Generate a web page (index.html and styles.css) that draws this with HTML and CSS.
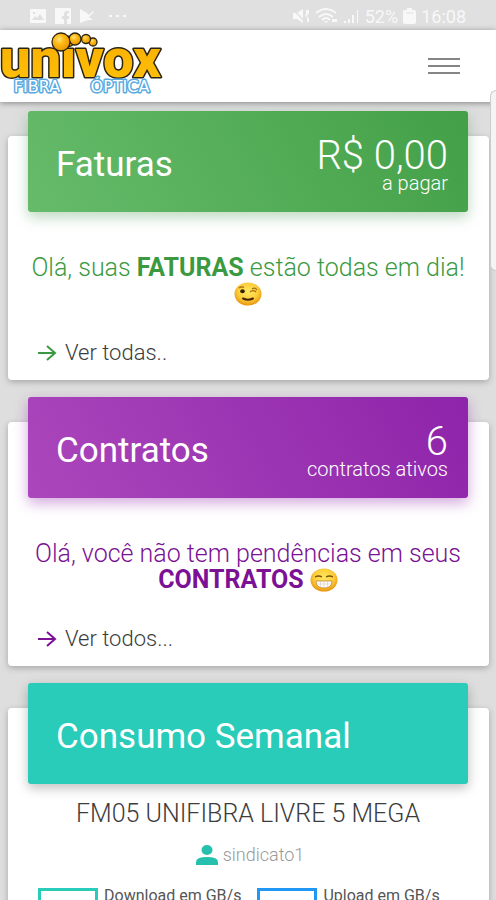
FILE: index.html
```html
<!DOCTYPE html>
<html lang="pt-BR">
<head>
<meta charset="utf-8">
<meta name="viewport" content="width=device-width, initial-scale=1">
<title>Univox Fibra Óptica</title>
<link rel="stylesheet" href="styles.css">
</head>
<body>
<div class="status">
  <div class="status-group">
    <svg width="18" height="16" viewBox="0 0 18 16"><path fill="currentColor" fill-rule="evenodd" d="M2 1h14a1 1 0 0 1 1 1v12a1 1 0 0 1-1 1H2a1 1 0 0 1-1-1V2a1 1 0 0 1 1-1zm1 11h12l-4-6-3 4-2-2zM4 4v2h2V4z"/></svg>
    <svg width="16" height="16" viewBox="0 0 16 16"><path fill="currentColor" d="M1 0h14a1 1 0 0 1 1 1v14a1 1 0 0 1-1 1h-3v-5h2V8h-2V6q0-1 2-1V3h-2q-3 0-3 3v2H7v3h2v5H1a1 1 0 0 1-1-1V1a1 1 0 0 1 1-1z"/></svg>
    <svg width="16" height="16" viewBox="0 0 16 16"><path fill="currentColor" d="M1 1l7 4 2 2 4-4 1 1-5 5 4 3H9l-8 3z"/></svg>
    <svg class="dots" width="18" height="16" viewBox="0 0 18 16"><path fill="currentColor" d="M0 7h3v2H0zM7 7h3v2H7zM14 7h3v2h-3z"/></svg>
  </div>
  <div class="status-group right">
    <svg width="18" height="16" viewBox="0 0 18 16"><path fill="currentColor" d="M1 5h4l6-4v14l-6-4H1zM14 2h3v3l-2 3 2 3v3h-2V9l-2-1 1-2z"/><path stroke="#e0e0e0" stroke-width="1.5" d="M1 1l13 14"/></svg>
    <svg width="24" height="16" viewBox="0 0 24 16"><g fill="none" stroke="currentColor" stroke-width="2"><path d="M1 5q10-8 20 0M4 9q7-6 14 0M7 12q4-4 8 0"/></g><path fill="currentColor" d="M9 13h4l-2 2zM17 11h5v3h-5z"/></svg>
    <svg width="16" height="16" viewBox="0 0 16 16"><path fill="currentColor" d="M0 13h2v2H0zM4 11h2v4H4zM8 7h2v8H8zM13 2h1v13h-1z"/></svg>
    <span>52%</span>
    <svg width="13" height="16" viewBox="0 0 13 16"><path fill="currentColor" d="M4 0h5v2h2q2 0 2 2v10q0 2-2 2H2q-2 0-2-2V4q0-2 2-2h2z"/><path stroke="#e0e0e0" d="M3 5h7"/></svg>
    <span>16:08</span>
  </div>
</div>

<header class="topbar">
  <a class="brand" href="#" aria-label="Univox Fibra Óptica">
    <svg width="166" height="64" viewBox="0 0 166 64">
      <defs>
        <linearGradient id="gold" x1="0" y1="0" x2="0" y2="1"><stop offset="0" stop-color="#f7a900"/><stop offset="1" stop-color="#ffc40a"/></linearGradient>
        <radialGradient id="ball" cx=".4" cy=".35" r=".7"><stop offset="0" stop-color="#ffe27a"/><stop offset=".4" stop-color="#fdb813"/><stop offset="1" stop-color="#e59400"/></radialGradient>
      </defs>
      <text class="logo-name" x="0" y="45" fill="url(#gold)">univox</text>
      <g fill="url(#ball)" stroke="#2b2412" stroke-width="1.3">
        <circle cx="93" cy="10" r="4"/><circle cx="86" cy="7" r="4.500"/><circle cx="75" cy="7" r="6"/><circle cx="61" cy="10" r="9"/>
      </g>
      <text class="logo-sub" x="37" y="60">FIBRA</text>
      <text class="logo-sub" x="120" y="60">ÓPTICA</text>
    </svg>
  </a>
  <button class="menu" type="button" aria-label="Menu"><span></span><span></span><span></span></button>
</header>

<main class="cards">
  <section class="card">
    <div class="card-head green">
      <h2>Faturas</h2>
      <p class="figure"><strong>R$ 0,00</strong><span>a pagar</span></p>
    </div>
    <p class="message green-text">Olá, suas <b>FATURAS</b> estão todas em dia!
      <svg class="emoji" width="28" height="24" viewBox="0 0 28 24"><defs><radialGradient id="face" cx=".5" cy=".4" r=".6"><stop offset="0" stop-color="#ffe95e"/><stop offset=".6" stop-color="#fdcf3d"/><stop offset="1" stop-color="#e8930c"/></radialGradient></defs><ellipse cx="14" cy="12" rx="13.5" ry="11.6" fill="url(#face)"/><ellipse cx="8.5" cy="9.3" rx="2.3" ry="2" fill="#33200a"/><path d="M5 6q3-2 5-.5M16 10q3-3 6 0M18 7q3-2 5 1" fill="none" stroke="#a46a12" stroke-width="1.2"/><path d="M9 16.5q5 2.500 10 0" fill="none" stroke="#4a2508" stroke-width="2" stroke-linecap="round"/></svg>
    </p>
    <a class="more green-text" href="#"><svg width="20" height="18" viewBox="0 0 20 18"><path d="M1 9h17M10 2l8 7-8 7" fill="none" stroke="currentColor" stroke-width="2"/></svg><span>Ver todas..</span></a>
  </section>

  <section class="card">
    <div class="card-head purple">
      <h2>Contratos</h2>
      <p class="figure"><strong>6</strong><span>contratos ativos</span></p>
    </div>
    <p class="message purple-text">Olá, você não tem pendências em seus <b>CONTRATOS</b>
      <svg class="emoji" width="28" height="24" viewBox="0 0 28 24"><ellipse cx="14" cy="12" rx="13.5" ry="11.6" fill="url(#face)"/><path d="M5 9q3.500-2 7 0M16 9q3.500-2 7 0" fill="none" stroke="#80500d" stroke-width="1.4"/><path d="M6 13h16q0 7-8 7t-8-7z" fill="#fff" stroke="#c5873a" stroke-width=".8"/><path d="M7 16h14M10.500 13v6M14 13v7M17.500 13v6" stroke="#c9bfb0" stroke-width=".5"/></svg>
    </p>
    <a class="more purple-text" href="#"><svg width="20" height="18" viewBox="0 0 20 18"><path d="M1 9h17M10 2l8 7-8 7" fill="none" stroke="currentColor" stroke-width="2"/></svg><span>Ver todos...</span></a>
  </section>

  <section class="card">
    <div class="card-head teal">
      <h2>Consumo Semanal</h2>
    </div>
    <h3 class="plan">FM05 UNIFIBRA LIVRE 5 MEGA</h3>
    <p class="user"><svg width="22" height="20" viewBox="0 0 22 20"><ellipse cx="11" cy="5" rx="5.500" ry="5"/><path d="M0 20v-3q0-5 11-5t11 5v3z"/></svg><span>sindicato1</span></p>
    <ul class="legend">
      <li><i class="swatch down"></i>Download em GB/s</li>
      <li><i class="swatch up"></i>Upload em GB/s</li>
    </ul>
  </section>
</main>
<div class="edge-handle"></div>
</body>
</html>
```

FILE: styles.css
```css
* { box-sizing: border-box; }

html { scrollbar-width: none; }

body {
  margin: 0;
  background: #dedede;
  color: #3c3c3c;
  font-family: Roboto, "Liberation Sans", sans-serif;
  font-weight: 300;
}

h2, h3, p, ul { margin: 0; padding: 0; }

.status {
  display: flex;
  justify-content: space-between;
  align-items: center;
  height: 30px;
  padding: 2px 30px 0 29px;
  background: #e0e0e0;
  color: #f8f8f8;
  font-size: 18px;
  font-weight: 400;
}

.status-group { display: flex; align-items: center; gap: 8px; }
.status-group.right { gap: 5px; }
.dots { margin-left: 6px; }

.topbar {
  position: relative;
  display: flex;
  justify-content: space-between;
  align-items: center;
  height: 72px;
  padding-right: 36px;
  background: #fff;
  box-shadow: 0 1px 6px rgba(0, 0, 0, .4);
}

.brand { display: block; height: 68px; }

.logo-name {
  font: 900 54px Roboto, sans-serif;
  stroke: #2b2412;
  stroke-width: 3px;
  stroke-linejoin: round;
  paint-order: stroke;
}

.logo-sub {
  font: 400 16px "DejaVu Sans", sans-serif;
  text-anchor: middle;
  fill: #fff;
  stroke: #58a9e0;
  stroke-width: 3px;
  stroke-linejoin: round;
  paint-order: stroke;
}

.menu {
  display: flex;
  flex-direction: column;
  gap: 5px;
  padding: 0;
  border: 0;
  background: none;
}

.menu span { width: 32px; height: 2px; background: #858585; }

.cards {
  display: flex;
  flex-direction: column;
  gap: 42px;
  padding: 34px 7px 30px 8px;
}

.card {
  display: flex;
  flex-direction: column;
  min-height: 244px;
  padding: 0 21px 14px 20px;
  border-radius: 4px;
  background: #fff;
  box-shadow: 0 2px 6px rgba(0, 0, 0, .25);
}

.card-head {
  display: flex;
  justify-content: space-between;
  align-items: center;
  height: 101px;
  margin-top: -25px;
  padding: 0 20px 0 28px;
  border-radius: 3px;
  color: #fff;
}

.card-head h2 { font-size: 35px; font-weight: 400; line-height: 40px; padding-top: 6px; }

.green { background: linear-gradient(60deg, #66bb6a, #43a047); box-shadow: 0 5px 14px rgba(60, 140, 70, .35); }
.purple { background: linear-gradient(60deg, #ab47bc, #8e24aa); box-shadow: 0 5px 14px rgba(142, 36, 170, .4); }
.teal { background: #29cbb9; box-shadow: 0 4px 12px rgba(0, 0, 0, .25); }

.figure { display: flex; flex-direction: column; text-align: right; padding-top: 6px; }
.figure strong { font-size: 40px; font-weight: 300; line-height: 36px; }
.figure span { font-size: 20px; line-height: 18px; }

.message {
  padding-top: 43px;
  font-size: 25px;
  line-height: 26px;
  text-align: center;
}

.message b { font-weight: 700; }
.green-text { color: #3b9a41; }
.purple-text { color: #7b1195; }
.emoji { vertical-align: -4px; }

.more {
  display: flex;
  align-items: center;
  gap: 8px;
  margin-top: auto;
  padding-left: 9px;
  font-size: 22px;
  line-height: 26px;
  text-decoration: none;
}

.more span { color: #3c3c3c; }

.plan {
  padding-top: 16px;
  font-size: 25px;
  font-weight: 300;
  line-height: 28px;
  text-align: center;
}

.user {
  display: flex;
  justify-content: center;
  align-items: center;
  gap: 5px;
  margin-top: 15px;
  padding-left: 4px;
  color: #999;
  font-size: 18px;
  line-height: 24px;
}

.user svg { fill: #26c0af; }

.legend {
  display: flex;
  gap: 16px;
  margin-top: 21px;
  padding-left: 10px;
  list-style: none;
  color: #555;
  font-size: 16px;
  font-weight: 400;
  line-height: 16px;
  white-space: nowrap;
}

.legend li { display: flex; gap: 6px; }
.swatch { width: 60px; height: 20px; border: 3px solid; }
.down { border-color: #29cbb9; }
.up { border-color: #2196f3; }

.edge-handle {
  position: absolute;
  top: 90px;
  right: 0;
  width: 6px;
  height: 181px;
  border: 1px solid #ccc;
  border-right: 0;
  border-radius: 6px 0 0 6px;
  background: #f4f4f4;
}
```
